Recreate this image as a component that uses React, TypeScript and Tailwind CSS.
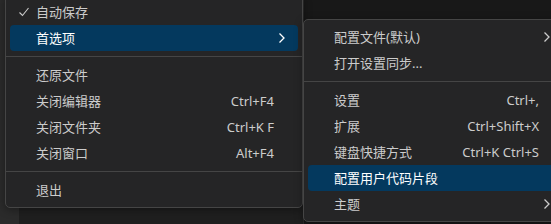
import React from "react";

type Item =
  | { type: "sep" }
  | {
      type?: "item";
      label: string;
      keys?: string;
      checked?: boolean;
      submenu?: boolean;
      active?: boolean;
    };

const fileMenu: Item[] = [
  { label: "自动保存", checked: true },
  { label: "首选项", submenu: true, active: true },
  { type: "sep" },
  { label: "还原文件" },
  { label: "关闭编辑器", keys: "Ctrl+F4" },
  { label: "关闭文件夹", keys: "Ctrl+K F" },
  { label: "关闭窗口", keys: "Alt+F4" },
  { type: "sep" },
  { label: "退出" },
];

const prefsMenu: Item[] = [
  { label: "配置文件(默认)", submenu: true },
  { label: "打开设置同步..." },
  { type: "sep" },
  { label: "设置", keys: "Ctrl+," },
  { label: "扩展", keys: "Ctrl+Shift+X" },
  { label: "键盘快捷方式", keys: "Ctrl+K Ctrl+S" },
  { label: "配置用户代码片段", active: true },
  { label: "主题", submenu: true },
];

function Check() {
  return (
    <svg width="12" height="12" viewBox="0 0 12 12" fill="none">
      <path d="M1.5 6.5 L4.5 9.5 L10.5 2" stroke="#cccccc" strokeWidth="1.1" />
    </svg>
  );
}

function Chevron({ color }: { color: string }) {
  return (
    <svg width="8" height="12" viewBox="0 0 8 12" fill="none">
      <path d="M1.5 1.5 L6 6 L1.5 10.5" stroke={color} strokeWidth="1.3" />
    </svg>
  );
}

function Menu({ items }: { items: Item[] }) {
  return (
    <div className="flex flex-col p-1">
      {items.map((it, i) => {
        if (it.type === "sep") {
          return (
            <div key={i} className="h-[11px] flex items-center -mx-1">
              <div className="h-px w-full bg-[#454545]" />
            </div>
          );
        }
        return (
          <div
            key={i}
            className={`h-[26px] flex items-center rounded-[4px] pl-[8px] pr-[12px] ${
              it.active ? "bg-[#04395e] text-white" : "text-[#cccccc]"
            }`}
          >
            <div className="w-[18px] flex items-center">{it.checked && <Check />}</div>
            <span className="flex-1 whitespace-nowrap">{it.label}</span>
            {it.keys && <span className="whitespace-nowrap mr-[4px]">{it.keys}</span>}
            <div className="w-[8px] flex items-center">
              {it.submenu && <Chevron color={it.active ? "#ffffff" : "#cccccc"} />}
            </div>
          </div>
        );
      })}
    </div>
  );
}

export default function App() {
  return (
    <div
      className="relative w-[551px] h-[224px] overflow-hidden bg-[#1f1f1f] text-[13px] leading-none"
      style={{ fontFamily: '"Segoe UI","Noto Sans","Noto Sans CJK SC",sans-serif' }}
    >
      {/* editor chrome behind the menus */}
      <div className="flex h-full">
        <div className="w-[19px] bg-[#2b2b2b]" />
        <div className="w-[284px] bg-[#1f1f1f]" />
        <div className="flex-1 border-l border-[#2b2b2b] bg-[#181818]" />
      </div>

      <div className="absolute left-[5px] top-[-6px] w-[298px] rounded-[5px] border border-[#454545] bg-[#252526] shadow-[0_2px_8px_rgba(0,0,0,0.36)]">
        <Menu items={fileMenu} />
      </div>

      <div className="absolute left-[303px] top-[19px] w-[265px] rounded-[5px] border border-[#454545] bg-[#252526] shadow-[0_2px_8px_rgba(0,0,0,0.36)]">
        <Menu items={prefsMenu} />
      </div>
    </div>
  );
}
